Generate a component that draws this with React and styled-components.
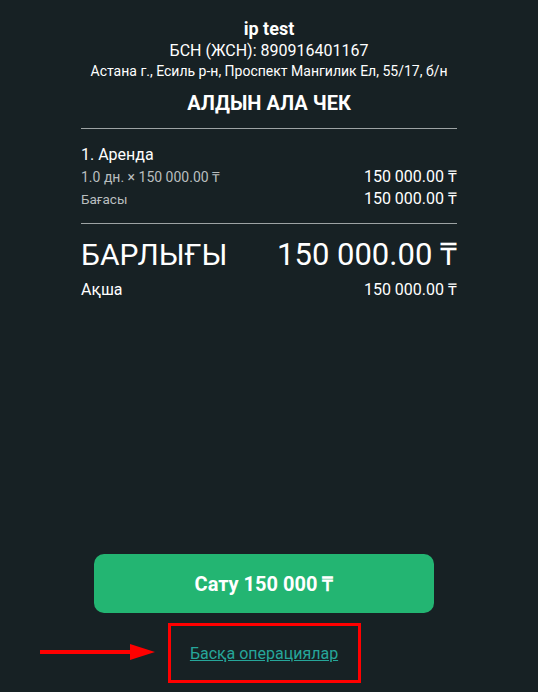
import React from 'react';
import styled, { createGlobalStyle } from 'styled-components';

const GlobalStyle = createGlobalStyle`
  html, body {
    margin: 0;
    padding: 0;
    background: #172124;
  }
  body {
    font-family: Roboto, "Liberation Sans", Arial, sans-serif;
    color: #ffffff;
  }
`;

const Page = styled.div`
  position: relative;
  width: 538px;
  min-height: 692px;
  display: flex;
  flex-direction: column;
  box-sizing: border-box;
`;

const Receipt = styled.div`
  width: 376px;
  margin: 0 auto;
  padding-top: 18px;
  display: flex;
  flex-direction: column;
`;

const Header = styled.div`
  display: flex;
  flex-direction: column;
  align-items: center;
  text-align: center;
  white-space: nowrap;
`;

const Company = styled.div`
  font-size: 18px;
  font-weight: 700;
  line-height: 22px;
`;

const Bin = styled.div`
  font-size: 16px;
  line-height: 22px;
`;

const Address = styled.div`
  font-size: 14px;
  line-height: 18px;
`;

const Title = styled.div`
  margin-top: 12px;
  font-size: 20px;
  font-weight: 700;
  line-height: 22px;
`;

const Divider = styled.hr`
  margin: ${p => p.$mt || 14}px 0 0;
  border: none;
  height: 1px;
  background: #9da3a4;
`;

const ItemName = styled.div`
  margin-top: 16px;
  font-size: 16px;
  line-height: 20px;
`;

const Row = styled.div`
  display: flex;
  justify-content: space-between;
  align-items: center;
  line-height: ${p => p.$lh || 22}px;
  margin-top: ${p => p.$mt || 0}px;
`;

const Label = styled.span`
  font-size: ${p => p.$size || 13}px;
  color: ${p => (p.$muted ? '#b9bebf' : '#ffffff')};
`;

const Amount = styled.span`
  font-size: ${p => p.$size || 16}px;
  color: #ffffff;
`;

const Footer = styled.div`
  margin-top: auto;
  padding: 0 10px 9px 0;
  display: flex;
  flex-direction: column;
  align-items: center;
`;

const SellButton = styled.button`
  width: 340px;
  height: 59px;
  border: none;
  border-radius: 10px;
  background: #23b572;
  color: #ffffff;
  font-family: inherit;
  font-size: 20px;
  font-weight: 700;
  cursor: pointer;
`;

const Highlight = styled.div`
  margin-top: 10px;
  width: 193px;
  height: 60px;
  box-sizing: border-box;
  border: 3px solid #ff0000;
  display: flex;
  align-items: center;
  justify-content: center;
`;

const OtherLink = styled.a`
  font-size: 16px;
  color: #26a69a;
  text-decoration: underline;
  cursor: pointer;
`;

const Arrow = styled.svg`
  position: absolute;
  left: 38px;
  top: 642px;
`;

const App = () => {
  return (
    <Page>
      <GlobalStyle />
      <Receipt>
        <Header>
          <Company>ip test</Company>
          <Bin>БСН (ЖСН): 890916401167</Bin>
          <Address>Астана г., Есиль р-н, Проспект Мангилик Ел, 55/17, б/н</Address>
          <Title>АЛДЫН АЛА ЧЕК</Title>
        </Header>
        <Divider />
        <ItemName>1. Аренда</ItemName>
        <Row $mt={1}>
          <Label $muted $size={14}>1.0 дн. × 150 000.00 ₸</Label>
          <Amount>150 000.00 ₸</Amount>
        </Row>
        <Row>
          <Label $muted $size={13.5}>Бағасы</Label>
          <Amount>150 000.00 ₸</Amount>
        </Row>
        <Divider $mt={13} />
        <Row $mt={13} $lh={36}>
          <Label $size={30}>БАРЛЫҒЫ</Label>
          <Amount $size={31}>150 000.00 ₸</Amount>
        </Row>
        <Row $mt={6}>
          <Label $size={16}>Ақша</Label>
          <Amount $size={16}>150 000.00 ₸</Amount>
        </Row>
      </Receipt>
      <Footer>
        <SellButton>Сату 150 000 ₸</SellButton>
        <Highlight>
          <OtherLink>Басқа операциялар</OtherLink>
        </Highlight>
      </Footer>
      <Arrow width="120" height="20" viewBox="0 0 120 20">
        <line x1="2" y1="10" x2="94" y2="10" stroke="#ff0000" strokeWidth="4" />
        <polygon points="92,2 117,10 92,18" fill="#ff0000" />
      </Arrow>
    </Page>
  );
};

export default App;
